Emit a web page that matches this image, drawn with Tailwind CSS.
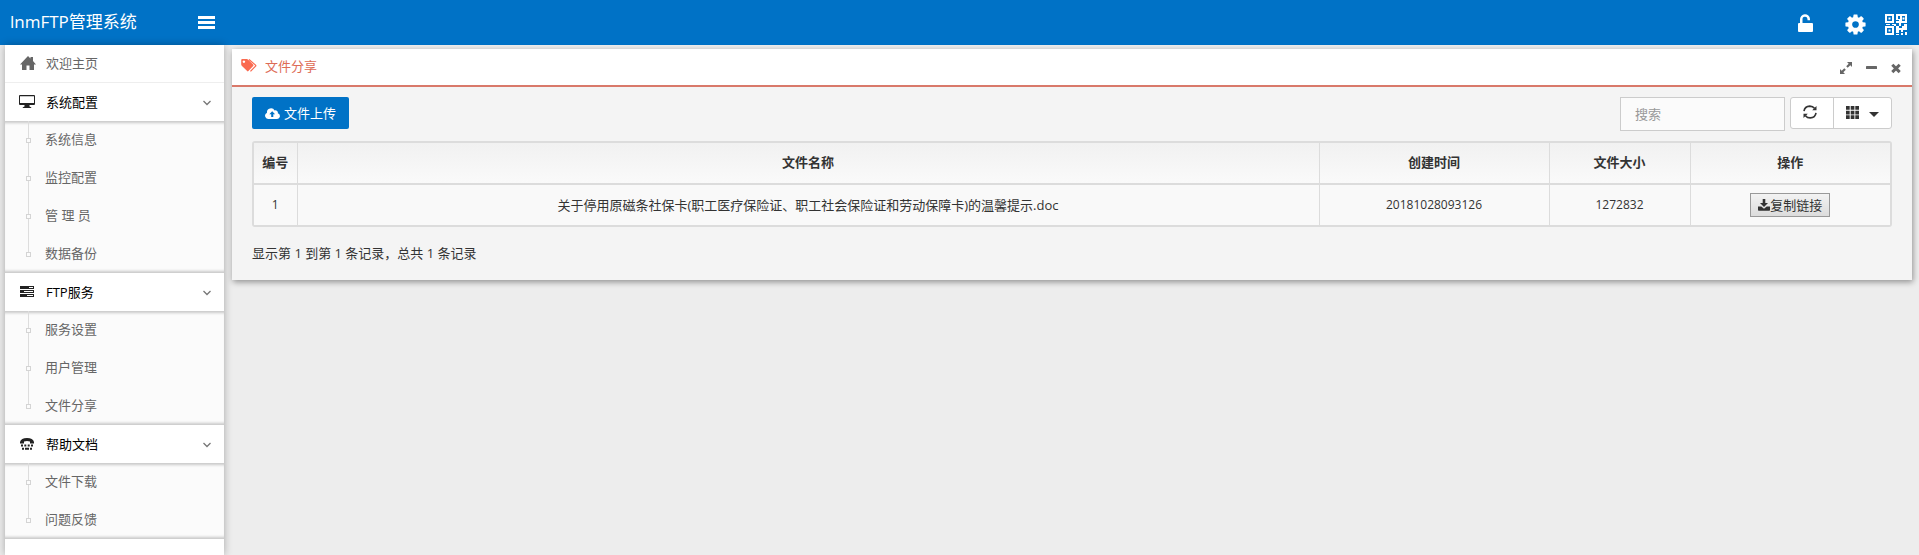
<!DOCTYPE html>
<html lang="zh-CN">
<head>
<meta charset="utf-8">
<title>lnmFTP管理系统</title>
<script src="https://cdn.jsdelivr.net/npm/@tailwindcss/browser@4"></script>
</head>
<body class="min-h-screen flex flex-col bg-[#ededed] font-['Open_Sans','Noto_Sans_CJK_SC',sans-serif] text-[13px] leading-5 text-[#333]">
<header class="h-[45px] shrink-0 flex items-center bg-[#0072c6] text-white pl-[10px] pr-3">
  <a href="#" class="w-[188px] text-[17px] leading-6 pb-[2px]">lnmFTP管理系统</a>
  <button aria-label="菜单" class="block"><svg class="w-[17px] h-[14px]" viewBox="0 0 17 14" fill="currentColor"><path d="M0 0h17v3H0zM0 5h17v3H0zM0 10h17v3H0z"/></svg></button>
  <nav class="ml-auto flex items-center pt-[4px]">
    <a href="#" aria-label="解锁" class="mr-[32px] pb-1"><svg class="w-[15px] h-[18px]" viewBox="0 0 15 18" fill="currentColor"><path d="M2 9V5.500A5 5 0 0 1 12 5v1.200H9.500V5A2.500 2.500 0 0 0 4.500 5.500V9H14q1 0 1 1v7q0 1-1 1H1q-1 0-1-1v-7q0-1 1-1z"/></svg></a>
    <a href="#" aria-label="设置" class="mr-[19px]"><svg class="w-[21px] h-[21px]" viewBox="96 96 1600 1600" fill="currentColor"><path d="M1152 896q0-106-75-181t-181-75-181 75-75 181 75 181 181 75 181-75 75-181zm512-109v222q0 12-8 23t-20 13l-185 28q-19 54-39 91 35 50 107 138 10 12 10 25t-9 23q-27 37-99 108t-94 71q-12 0-26-9l-138-108q-44 23-91 38-16 136-29 186-7 28-36 28h-222q-14 0-24.500-8.500t-11.500-21.500l-28-184q-49-16-90-37l-141 107q-10 9-25 9-14 0-25-11-126-114-165-168-7-10-7-23 0-12 8-23 15-21 51-66.500t54-70.500q-27-50-41-99l-183-27q-13-2-21-12.500t-8-23.500v-222q0-12 8-23t19-13l186-28q14-46 39-92-40-57-107-138-10-12-10-24 0-10 9-23 26-36 98.500-107.500t94.500-71.500q13 0 26 10l138 107q44-23 91-38 16-136 29-186 7-28 36-28h222q14 0 24.500 8.500t11.500 21.500l28 184q49 16 90 37l142-107q9-9 24-9 13 0 25 10 129 119 165 170 7 8 7 22 0 12-8 23-15 21-51 66.500t-54 70.500q26 50 41 98l183 28q13 2 21 12.500t8 23.500z"/></svg></a>
    <a href="#" aria-label="二维码"><svg class="w-[22px] h-[21px]" viewBox="0 0 22 21" fill="currentColor"><path fill-rule="evenodd" d="M0 0h9v9H0zM2 2v5h5V2zM0 12h9v9H0zm2 2v5h5v-5zM11 0h4v2h-2v3h2V0h7v9h-6v3h-2V9h-3V7h3V6h-3zm6 2v5h3V2zM3.500 3.500h2v2h-2zM3.500 15.500h2v2h-2zM17.500 3.500h2v2h-2zM1 10h4v1H1zM7 10h4v2h3v2h3v-2h2v-2h3v6h-4v2h-2v-2h-2v3h-3v-7H9v-1H7zM11 20h3v1h-3zM16 19h2v2h-2zM20 18h2v3h-2z"/></svg></a>
  </nav>
</header>

<div class="flex-1 flex">
  <aside class="w-[219px] ml-[5px] shrink-0 bg-white shadow-[0_0_8px_rgba(0,0,0,0.3)] text-[#666]">
    <nav class="[clip-path:inset(0)]">
      <a href="#" class="h-[38px] flex items-center pl-[15px] pb-px border-b border-[#eee]">
        <svg class="w-4 h-4 mr-[10px] text-[#666]" viewBox="0 0 16 16" fill="currentColor"><path d="M8 1l2.500 2.500V2H13v4l3 3.500h-2V15H9.500v-4.500h-3V15H2V9.500H0z"/></svg>欢迎主页</a>

      <button class="w-full h-[38px] flex items-center pl-[14px] pr-[13px] pb-px text-black">
        <svg class="w-4 h-[15px] mr-[11px] text-[#222]" viewBox="0 0 16 15" fill="currentColor"><path fill-rule="evenodd" d="M1 1h14q1 0 1 1v8q0 1-1 1h-4.500v1.500q2 .5 2 1.500h-9q0-1 2-1.500V11H1q-1 0-1-1V2q0-1 1-1zm0 1.200V9h14V2.200z"/></svg>系统配置
        <svg class="w-2 h-[6px] ml-auto mt-[3px]" viewBox="0 0 8 6" fill="none" stroke="#777" stroke-width="1.300"><path d="M.5 1L4 4.500 7.500 1"/></svg></button>
      <ul class="relative bg-[#fbfbfb] shadow-[inset_0_4px_3px_-2px_rgba(0,0,0,0.2),inset_0_-4px_3px_-2px_rgba(0,0,0,0.2)] before:absolute before:left-[23px] before:top-0 before:bottom-[19px] before:w-px before:bg-[#ddd]">
        <li><a href="#" class="h-[38px] flex items-center pl-[21px] pb-[3px]"><i class="relative size-[5px] border border-[#d4d4d4] bg-[#fbfbfb] mt-[3px] mr-[14px]"></i>系统信息</a></li>
        <li><a href="#" class="h-[38px] flex items-center pl-[21px] pb-[3px]"><i class="relative size-[5px] border border-[#d4d4d4] bg-[#fbfbfb] mt-[3px] mr-[14px]"></i>监控配置</a></li>
        <li><a href="#" class="h-[38px] flex items-center pl-[21px] pb-[3px]"><i class="relative size-[5px] border border-[#d4d4d4] bg-[#fbfbfb] mt-[3px] mr-[14px]"></i>管 理 员</a></li>
        <li><a href="#" class="h-[38px] flex items-center pl-[21px] pb-[3px]"><i class="relative size-[5px] border border-[#d4d4d4] bg-[#fbfbfb] mt-[3px] mr-[14px]"></i>数据备份</a></li>
      </ul>

      <button class="w-full h-[38px] flex items-center pl-[15px] pr-[13px] pb-px text-black">
        <svg class="w-[14px] h-[11px] mr-3 text-[#222]" viewBox="0 0 14 11"><path fill="currentColor" d="M0 0h14v3H0zM0 4h14v3H0zM0 8h14v3H0z"/><path fill="#fff" d="M9 1h4v1H9zM4 5h9v1H4zM7 9h6v1H7z"/></svg>FTP服务
        <svg class="w-2 h-[6px] ml-auto mt-[3px]" viewBox="0 0 8 6" fill="none" stroke="#777" stroke-width="1.300"><path d="M.5 1L4 4.500 7.500 1"/></svg></button>
      <ul class="relative bg-[#fbfbfb] shadow-[inset_0_4px_3px_-2px_rgba(0,0,0,0.2),inset_0_-4px_3px_-2px_rgba(0,0,0,0.2)] before:absolute before:left-[23px] before:top-0 before:bottom-[19px] before:w-px before:bg-[#ddd]">
        <li><a href="#" class="h-[38px] flex items-center pl-[21px] pb-[3px]"><i class="relative size-[5px] border border-[#d4d4d4] bg-[#fbfbfb] mt-[3px] mr-[14px]"></i>服务设置</a></li>
        <li><a href="#" class="h-[38px] flex items-center pl-[21px] pb-[3px]"><i class="relative size-[5px] border border-[#d4d4d4] bg-[#fbfbfb] mt-[3px] mr-[14px]"></i>用户管理</a></li>
        <li><a href="#" class="h-[38px] flex items-center pl-[21px] pb-[3px]"><i class="relative size-[5px] border border-[#d4d4d4] bg-[#fbfbfb] mt-[3px] mr-[14px]"></i>文件分享</a></li>
      </ul>

      <button class="w-full h-[38px] flex items-center pl-[15px] pr-[13px] pb-px text-black">
        <svg class="w-[14px] h-[12px] mr-3 text-[#222]" viewBox="0 0 14 12" fill="currentColor"><path d="M0 5.500V4q1-4 7-4t7 4v1.500h-4V3.600q-3-1-6 0v1.900zM1 6.500h2v2H1zM4.300 6.500h2v2h-2zM7.700 6.500h2v2h-2zM11 6.500h2v2h-2zM2 9.700h2v2H2zM5 9.700h4v2H5zM10 9.700h2v2h-2z"/></svg>帮助文档
        <svg class="w-2 h-[6px] ml-auto mt-[3px]" viewBox="0 0 8 6" fill="none" stroke="#777" stroke-width="1.300"><path d="M.5 1L4 4.500 7.500 1"/></svg></button>
      <ul class="relative bg-[#fbfbfb] shadow-[inset_0_4px_3px_-2px_rgba(0,0,0,0.2),inset_0_-4px_3px_-2px_rgba(0,0,0,0.2)] before:absolute before:left-[23px] before:top-0 before:bottom-[19px] before:w-px before:bg-[#ddd]">
        <li><a href="#" class="h-[38px] flex items-center pl-[21px] pb-[3px]"><i class="relative size-[5px] border border-[#d4d4d4] bg-[#fbfbfb] mt-[3px] mr-[14px]"></i>文件下载</a></li>
        <li><a href="#" class="h-[38px] flex items-center pl-[21px] pb-[3px]"><i class="relative size-[5px] border border-[#d4d4d4] bg-[#fbfbfb] mt-[3px] mr-[14px]"></i>问题反馈</a></li>
      </ul>
    </nav>
  </aside>

  <main class="flex-1 min-w-0 pl-2 pr-[7px] pt-1">
    <section class="bg-[#f4f4f4] shadow-[1px_2px_6px_rgba(0,0,0,0.4)]">
      <div class="h-[38px] flex items-center bg-white border-b-2 border-[#d9796a] pl-[9px] pr-[11px] text-[#dd6b55]">
        <svg class="w-[16px] h-[13px] mr-2 mb-[4px]" viewBox="0 0 15 12.500"><path fill="#fa6a50" fill-rule="evenodd" d="M1 0h4.500q.6 0 1 .4l5 5q.7.700 0 1.400l-4.600 4.800q-.6.600-1.200 0L.5 6.400Q0 6 0 5.400V1q0-1 1-1zm1.600 1.400a1.200 1.200 0 1 0 .01 0z"/><path fill="none" stroke="#fa6a50" stroke-width="1.200" d="M7.500.5l6.300 5.400q.5.500 0 1l-4.900 5"/></svg>
        <h2 class="font-normal pb-[3px]">文件分享</h2>
        <div class="ml-auto flex items-center gap-[14px] text-[#666] pt-[2px]">
          <button aria-label="全屏"><svg class="block size-3" viewBox="0 0 12 12" fill="currentColor"><path d="M7 0h5v5l-1.700-1.700-2.600 2.500L6.200 4.300l2.500-2.600zM5 12H0V7l1.700 1.700 2.600-2.500 1.500 1.500-2.500 2.600z"/></svg></button>
          <button aria-label="最小化"><svg class="block w-[11px] h-3" viewBox="0 0 11 12" fill="currentColor"><rect y="4" width="11" height="3" rx=".6"/></svg></button>
          <button aria-label="关闭"><svg class="block w-[10px] h-3" viewBox="0 0 10 12" stroke="currentColor" stroke-width="3"><path d="M1.300 2.700l7.400 7.400M8.700 2.700l-7.400 7.400"/></svg></button>
        </div>
      </div>
      <div class="px-5 pt-[10px] pb-[17px]">
        <div class="flex items-start h-11">
          <button class="h-8 flex items-center bg-[#0072c6] text-white rounded-[2px] px-[13px] gap-1">
            <svg class="w-[15px] h-[11px]" viewBox="0 0 15 11"><path fill="#fff" d="M3.500 11a3.300 3.300 0 0 1-1.500-6.300A4 4 0 0 1 9.600 2.600a2.300 2.300 0 0 1 3.200 2.700A2.900 2.900 0 0 1 12 11z"/><path fill="#0072c6" d="M7.200 3.200l2.900 3H8.300V9H6.200V6.200H4.300z"/></svg>文件上传</button>
          <input type="text" aria-label="搜索" placeholder="搜索" class="ml-auto w-[165px] h-[34px] border border-[#ccc] bg-[#fbfbfb] px-[14px] placeholder:text-[#999] outline-none">
          <div class="ml-[5px] h-8 flex border border-[#ccc] rounded-[3px] bg-white text-[#333]">
            <button aria-label="刷新" class="w-[43px] flex justify-center items-center border-r border-[#ccc] pr-1 pb-[2px]"><svg class="w-[14px] h-[14px]" viewBox="0 0 14 14"><path fill="none" stroke="currentColor" stroke-width="1.600" d="M1 6.200Q1.700 1.300 6.800 1.100q3 0 4.700 2.200M13 7.800q-.7 4.900-5.800 5.100-3 0-4.700-2.200"/><path fill="currentColor" d="M13.500 1v4.300H9.200zM.5 13V8.700h4.300z"/></svg></button>
            <button aria-label="列" class="w-[57px] flex justify-center items-center gap-[10px] pb-[2px]"><svg class="size-[13px]" viewBox="0 0 13 13" fill="currentColor"><path d="M0 0h3.700v3.700H0zM4.700 0h3.700v3.700H4.700zM9.300 0H13v3.700H9.300zM0 4.700h3.700v3.700H0zM4.700 4.700h3.700v3.700H4.700zM9.300 4.700H13v3.700H9.300zM0 9.300h3.700V13H0zM4.700 9.300h3.700V13H4.700zM9.300 9.300H13V13H9.300z"/></svg><svg class="w-[10px] h-[5px] mt-1" viewBox="0 0 10 5" fill="currentColor"><path d="M0 0h10L5 5z"/></svg></button>
          </div>
        </div>
        <div class="border-2 border-[#dcdcdc] rounded-[3px]">
          <table class="w-full table-fixed border-collapse text-center">
            <colgroup><col class="w-[43px]"><col><col class="w-[230px]"><col class="w-[141px]"><col class="w-[200px]"></colgroup>
            <thead class="bg-linear-to-b from-[#f1f1f1] to-[#fafafa]">
              <tr class="h-[41px] border-b-2 border-[#dcdcdc] *:pb-[2px]"><th class="border-r border-r-[#dcdcdc]">编号</th><th class="border-r border-r-[#dcdcdc]">文件名称</th><th class="border-r border-r-[#dcdcdc]">创建时间</th><th class="border-r border-r-[#dcdcdc]">文件大小</th><th>操作</th></tr>
            </thead>
            <tbody class="bg-[#f9f9f9]">
              <tr class="h-[41px]"><td class="border-r border-[#dcdcdc] text-xs">1</td><td class="border-r border-[#dcdcdc]">关于停用原磁条社保卡(职工医疗保险证、职工社会保险证和劳动保障卡)的温馨提示.doc</td><td class="border-r border-[#dcdcdc] text-xs">20181028093126</td><td class="border-r border-[#dcdcdc] text-xs">1272832</td><td><button class="inline-flex items-center justify-center align-middle w-20 h-6 border border-[#999] bg-linear-to-b from-[#f3f3f3] to-[#dcdcdc]"><svg class="size-3" viewBox="0 0 12 12" fill="currentColor"><path d="M4.700 0h2.600v4H10L6 8 2 4h2.700zM0 7.500h3.300L6 9.800l2.700-2.300H12V11q0 .7-.7.700H.7Q0 11.700 0 11z"/></svg>复制链接</button></td></tr>
            </tbody>
          </table>
        </div>
        <p class="mt-4">显示第 1 到第 1 条记录，总共 1 条记录</p>
      </div>
    </section>
  </main>
</div>
</body>
</html>
